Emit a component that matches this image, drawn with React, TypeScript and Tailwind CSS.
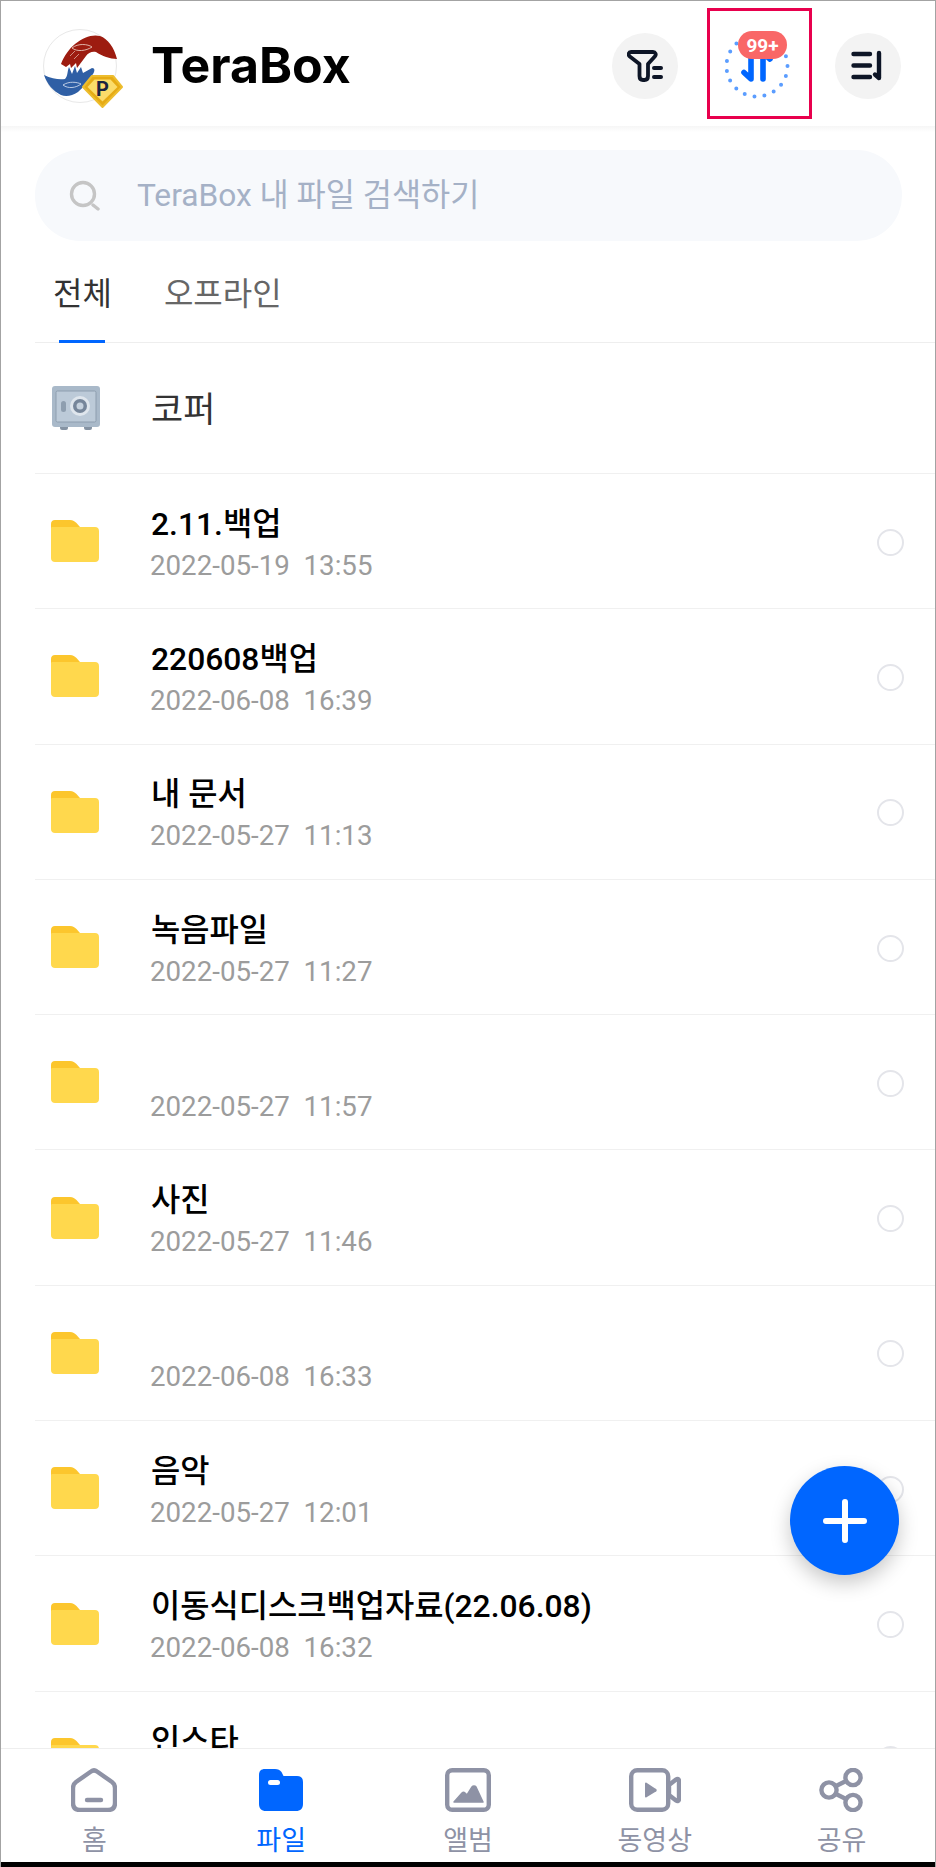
import type { ReactNode } from "react";

// File browser screen: header, search, tabs, folder list, tab bar.

const FONT = "font-['Roboto','Noto_Sans_CJK_KR',sans-serif]";

interface Folder {
  name: string;
  date: string;
}

const folders: Folder[] = [
  { name: "2.11.백업", date: "2022-05-19  13:55" },
  { name: "220608백업", date: "2022-06-08  16:39" },
  { name: "내 문서", date: "2022-05-27  11:13" },
  { name: "녹음파일", date: "2022-05-27  11:27" },
  { name: "", date: "2022-05-27  11:57" },
  { name: "사진", date: "2022-05-27  11:46" },
  { name: "", date: "2022-06-08  16:33" },
  { name: "음악", date: "2022-05-27  12:01" },
  { name: "이동식디스크백업자료(22.06.08)", date: "2022-06-08  16:32" },
  { name: "인스타", date: "" },
];

function Logo() {
  return (
    <svg width="90" height="88" viewBox="0 0 90 88" className="shrink-0">
      <circle cx="40" cy="40" r="36.5" fill="#fff" stroke="#e8e8e8" strokeWidth="1" />
      {/* red hand, reaching down */}
      <path
        d="M21 38 C24 30 29 23 35 18 C43 11 53 8 60 10 C68 13 74 21 77 33 C70 33 62 30 56 26 C52 25 48 27 46 30 L37 42 L36 37 L31 42 L30 38 L26 41 Z"
        fill="#9d1c10"
      />
      <path d="M32 22 C38 17 48 18 52 21 C46 25 37 26 32 22 Z" fill="none" stroke="#e6c3b8" strokeWidth="0.9" />
      <path d="M30 30 L35 25 M34 33 L39 28" stroke="#e6c3b8" strokeWidth="0.7" />
      {/* blue hand, reaching up */}
      <path
        transform="translate(2 3)"
        d="M2 46 C10 50 18 51 23 50 C26 47 25 43 27 38 L30 45 L33 37 L35 44 L39 38 L41 44 L50 39 C53 39 53 42 51 45 C45 53 42 58 36 63 C30 67 24 68 19 66 C11 62 5 55 2 46 Z"
        fill="#2f5fa5"
      />
      <path transform="translate(2 3)" d="M21 56 C27 52 35 53 39 55 C34 59 26 60 21 56 Z" fill="none" stroke="#c9d6ea" strokeWidth="0.9" />
      {/* premium gem */}
      <path d="M43 61 L52 50 L73 50 L82 61 L62.5 81 Z" fill="#e6ab14" stroke="#edbd2e" strokeWidth="2" strokeLinejoin="round" />
      <path d="M47.5 61 L54.5 53.5 L70.5 53.5 L77.5 61 L62.5 75.5 Z" fill="#fbdc6a" />
      <text
        x="62.5"
        y="70"
        textAnchor="middle"
        fontSize="20"
        fontWeight="700"
        fontFamily="Roboto, sans-serif"
        fill="#1b2340"
      >
        P
      </text>
    </svg>
  );
}

function FilterIcon() {
  return (
    <svg width="36" height="34" viewBox="0 0 36 34" fill="none" stroke="#0d1526" strokeWidth="3.8" strokeLinecap="round" strokeLinejoin="round">
      <path d="M4 3 H26 C28.5 3 29.5 5.5 28 7.2 L21 15 V27 C21 30 19.5 31 17.5 31 H16 C14 31 12.5 30 12.5 27 V15 L2.5 7.2 C1 5.5 1.5 3 4 3 Z" />
      <path d="M27 19 H34 M27 28 H34" strokeWidth="4" />
    </svg>
  );
}

function SortIcon() {
  return (
    <svg width="34" height="32" viewBox="0 0 34 32" fill="none" stroke="#0d1526" strokeWidth="4.4" strokeLinecap="round" strokeLinejoin="round">
      <path d="M2.5 4 H19 M2.5 15.5 H19 M2.5 27 H19" />
      <path d="M28 3 V28 L24 24.5" />
    </svg>
  );
}

function SyncIcon() {
  return (
    <div className="relative h-[66px] w-[66px] shrink-0">
      <svg width="66" height="66" viewBox="0 0 66 66" fill="none">
        <circle cx="33" cy="33" r="30.5" stroke="#5b9dff" strokeWidth="4" strokeLinecap="round" strokeDasharray="0 10.08" />
        <path d="M27 22 V46 L20 39.5" stroke="#0066ff" strokeWidth="5.6" strokeLinecap="round" strokeLinejoin="round" />
        <path d="M39 46 V20 L46 26" stroke="#0066ff" strokeWidth="5.6" strokeLinecap="round" strokeLinejoin="round" />
      </svg>
      <span className="absolute left-[14px] top-[-2px] flex h-[28px] w-[49px] items-center justify-center rounded-full bg-[#f96767] text-[19px] font-bold leading-none text-white">
        99+
      </span>
    </div>
  );
}

function RoundButton({ children }: { children: ReactNode }) {
  return (
    <div className="flex h-[66px] w-[66px] shrink-0 items-center justify-center rounded-full bg-[#f3f3f3]">
      {children}
    </div>
  );
}

function SafeIcon() {
  return (
    <svg width="50" height="44" viewBox="0 0 50 44">
      <rect x="9" y="38" width="8" height="6" rx="2" fill="#8593a3" />
      <rect x="33" y="38" width="8" height="6" rx="2" fill="#8593a3" />
      <rect x="1" y="0" width="48" height="41" rx="3" fill="#a9b9c9" />
      <rect x="5" y="5" width="40" height="31" rx="1.5" fill="#bccad8" stroke="#8e9eaf" strokeWidth="1" />
      <rect x="10" y="15" width="5" height="11" rx="2.5" fill="#8e9eaf" />
      <circle cx="29" cy="20" r="10" fill="#dfe6ed" />
      <circle cx="29" cy="20" r="7" fill="#76869a" />
      <circle cx="29" cy="20" r="3.5" fill="#c6d2de" />
    </svg>
  );
}

function FolderIcon() {
  return (
    <svg width="48" height="42" viewBox="0 0 48 42">
      <path d="M4 0 H19 C22 0 24 1.5 25.5 3 L29 7 H10 L0 9 V4 C0 1.5 1.5 0 4 0 Z" fill="#fcc62d" />
      <path d="M0 8 C0 7 1 7 2 7 H44 C46.5 7 48 8.5 48 11 V38 C48 40.5 46.5 42 44 42 H4 C1.5 42 0 40.5 0 38 Z" fill="#ffd84d" />
    </svg>
  );
}

function FolderRow({ name, date }: Folder) {
  return (
    <div className="flex h-[135.3px] shrink-0 items-center border-b border-[#f0f0f0] pl-[16px] pr-[31px]">
      <FolderIcon />
      <div className="ml-[51px] mt-[4px] min-w-0 flex-1">
        <div className="ml-[1px] h-[44px] whitespace-nowrap text-[31.8px] font-medium leading-[44px] text-black">{name}</div>
        <div className="mt-[1px] h-[38px] whitespace-pre text-[27.7px] leading-[38px] text-[#9c9c9c]">{date}</div>
      </div>
      <div className="mt-[2px] h-[27px] w-[27px] shrink-0 rounded-full border-2 border-[#e4e5ea]" />
    </div>
  );
}

const NAV_ICON = "#8e92a5";

function HomeIcon() {
  return (
    <svg width="46" height="44" viewBox="0 0 46 44" fill="none" stroke={NAV_ICON} strokeWidth="4.4" strokeLinejoin="round" strokeLinecap="round">
      <path d="M20 3.5 C22 2 24 2 26 3.5 L41 14 C43 15.5 44 17 44 20 V35 C44 39.5 41.5 42 37 42 H9 C4.5 42 2 39.5 2 35 V20 C2 17 3 15.5 5 14 Z" />
      <path d="M16 32 H30" />
    </svg>
  );
}

function FilesIcon() {
  return (
    <svg width="46" height="44" viewBox="0 0 46 44">
      <path d="M7 1 H17 C20 1 22 2 23.5 4 L25.5 8 H39 C43 8 45 10 45 14 V36 C45 40.5 42.5 43 38 43 H8 C3.5 43 1 40.5 1 36 V7 C1 3 3 1 7 1 Z" fill="#0066ff" />
      <rect x="10" y="12" width="12" height="5" rx="2.5" fill="#fff" />
    </svg>
  );
}

function AlbumIcon() {
  return (
    <svg width="46" height="44" viewBox="0 0 46 44" fill="none">
      <rect x="2.2" y="2.2" width="41.6" height="39.6" rx="5" stroke={NAV_ICON} strokeWidth="4.4" />
      <path d="M9 34 L17 25 C18 24 19 24 20 25 L22 27 L27 19 C28 17.5 30 17.5 31 19 L38 34 Z" fill={NAV_ICON} stroke={NAV_ICON} strokeWidth="1.5" strokeLinejoin="round" />
    </svg>
  );
}

function VideoIcon() {
  return (
    <svg width="52" height="44" viewBox="0 0 52 44" fill="none" stroke={NAV_ICON} strokeWidth="4.4" strokeLinejoin="round">
      <rect x="2.2" y="2.2" width="37" height="39.6" rx="6" />
      <path d="M40 17 L47 11.5 C48.5 10.5 50 11 50 13 V31 C50 33 48.5 33.5 47 32.5 L40 27 Z" />
      <path d="M17 15.5 L26 21.5 C27 22 27 22.5 26 23 L17 28.5 Z" fill={NAV_ICON} strokeWidth="2" />
    </svg>
  );
}

function ShareIcon() {
  return (
    <svg width="46" height="44" viewBox="0 0 46 44" fill="none" stroke={NAV_ICON} strokeWidth="4.4">
      <circle cx="10" cy="22" r="7.6" />
      <circle cx="34" cy="9.5" r="7.6" />
      <circle cx="34" cy="34.5" r="7.6" />
      <path d="M17 18 L27 13 M17 26 L27 31" />
    </svg>
  );
}

const tabs = [
  { label: "홈", icon: <HomeIcon /> },
  { label: "파일", icon: <FilesIcon />, active: true },
  { label: "앨범", icon: <AlbumIcon /> },
  { label: "동영상", icon: <VideoIcon /> },
  { label: "공유", icon: <ShareIcon /> },
];

export default function App() {
  return (
    <div className={`${FONT} relative flex h-[1867px] w-[936px] flex-col overflow-hidden border-x border-t border-x-[#a3a3a3] border-t-[#a3a3a3] bg-white`}>
      <header className="flex h-[125px] shrink-0 items-center pl-[39px] pr-[34px] pt-[5px]">
        <div className="mt-[7px] mr-[-2px]">
          <Logo />
        </div>
        <span className="mb-[3px] ml-[23px] font-['Inter',sans-serif] text-[50px] font-bold leading-none text-black">TeraBox</span>
        <div className="ml-auto flex items-center gap-[45px]">
          <div className="mr-[1px]">
            <RoundButton>
              <FilterIcon />
            </RoundButton>
          </div>
          <SyncIcon />
          <RoundButton>
            <SortIcon />
          </RoundButton>
        </div>
      </header>
      {/* highlight frame around the transfer button */}
      <div className="absolute left-[706px] top-[7px] h-[111px] w-[105px] border-[3px] border-[#e8004d]" />

      <div className="h-[6px] shrink-0 bg-gradient-to-b from-[#f6f6f6] to-white" />

      <div className="ml-[34px] mr-[33px] mt-[18px] flex h-[91px] shrink-0 items-center rounded-[45px] bg-[#f7f9fc] pl-[34px]">
        <svg width="31" height="31" viewBox="0 0 31 31" fill="none" stroke="#c5c5c5" strokeWidth="3.4" strokeLinecap="round">
          <circle cx="14" cy="14" r="11.5" />
          <path d="M24 25 L29 29" />
        </svg>
        <span className="ml-[37px] text-[31.7px] leading-none text-[#a5b1c6]">TeraBox 내 파일 검색하기</span>
      </div>

      <nav className="ml-[34px] flex h-[102px] shrink-0 items-start border-b border-[#eeeeee] pl-[18px] pt-[31px] text-[32px] leading-[44px]">
        <div className="relative h-[71px] text-[#333333]">
          전체
          <span className="absolute bottom-0 left-[6px] h-[3px] w-[46px] bg-[#0066ff]" />
        </div>
        <div className="ml-[52px] text-[#666666]">오프라인</div>
      </nav>

      <main className="ml-[34px] min-h-0 flex-1 overflow-hidden">
        <div className="flex h-[131px] items-center border-b border-[#f0f0f0] pl-[16px]">
          <SafeIcon />
          <span className="ml-[50px] mt-[4px] text-[35px] leading-none text-[#333333]">코퍼</span>
        </div>
        {folders.map((folder, i) => (
          <FolderRow key={i} {...folder} />
        ))}
      </main>

      <footer className="grid h-[114px] shrink-0 grid-cols-5 border-t border-[#eeeeee] bg-white">
        {tabs.map((tab) => (
          <div key={tab.label} className="flex flex-col items-center pt-[19px]">
            <div className="flex h-[44px] items-center">{tab.icon}</div>
            <span className={`mt-[11px] text-[27px] leading-[36px] ${tab.active ? "text-[#0066ff]" : "text-[#8e92a5]"}`}>
              {tab.label}
            </span>
          </div>
        ))}
      </footer>
      <div className="h-[5px] shrink-0 bg-black" />

      {/* floating add button */}
      <button className="absolute left-[789px] top-[1465px] flex h-[109px] w-[109px] items-center justify-center rounded-full bg-[#0066ff] shadow-[0_8px_20px_rgba(0,0,0,0.22)]">
        <svg width="44" height="44" viewBox="0 0 44 44" stroke="#fff" strokeWidth="6" strokeLinecap="round">
          <path d="M22 3 V41 M3 22 H41" />
        </svg>
      </button>
    </div>
  );
}
